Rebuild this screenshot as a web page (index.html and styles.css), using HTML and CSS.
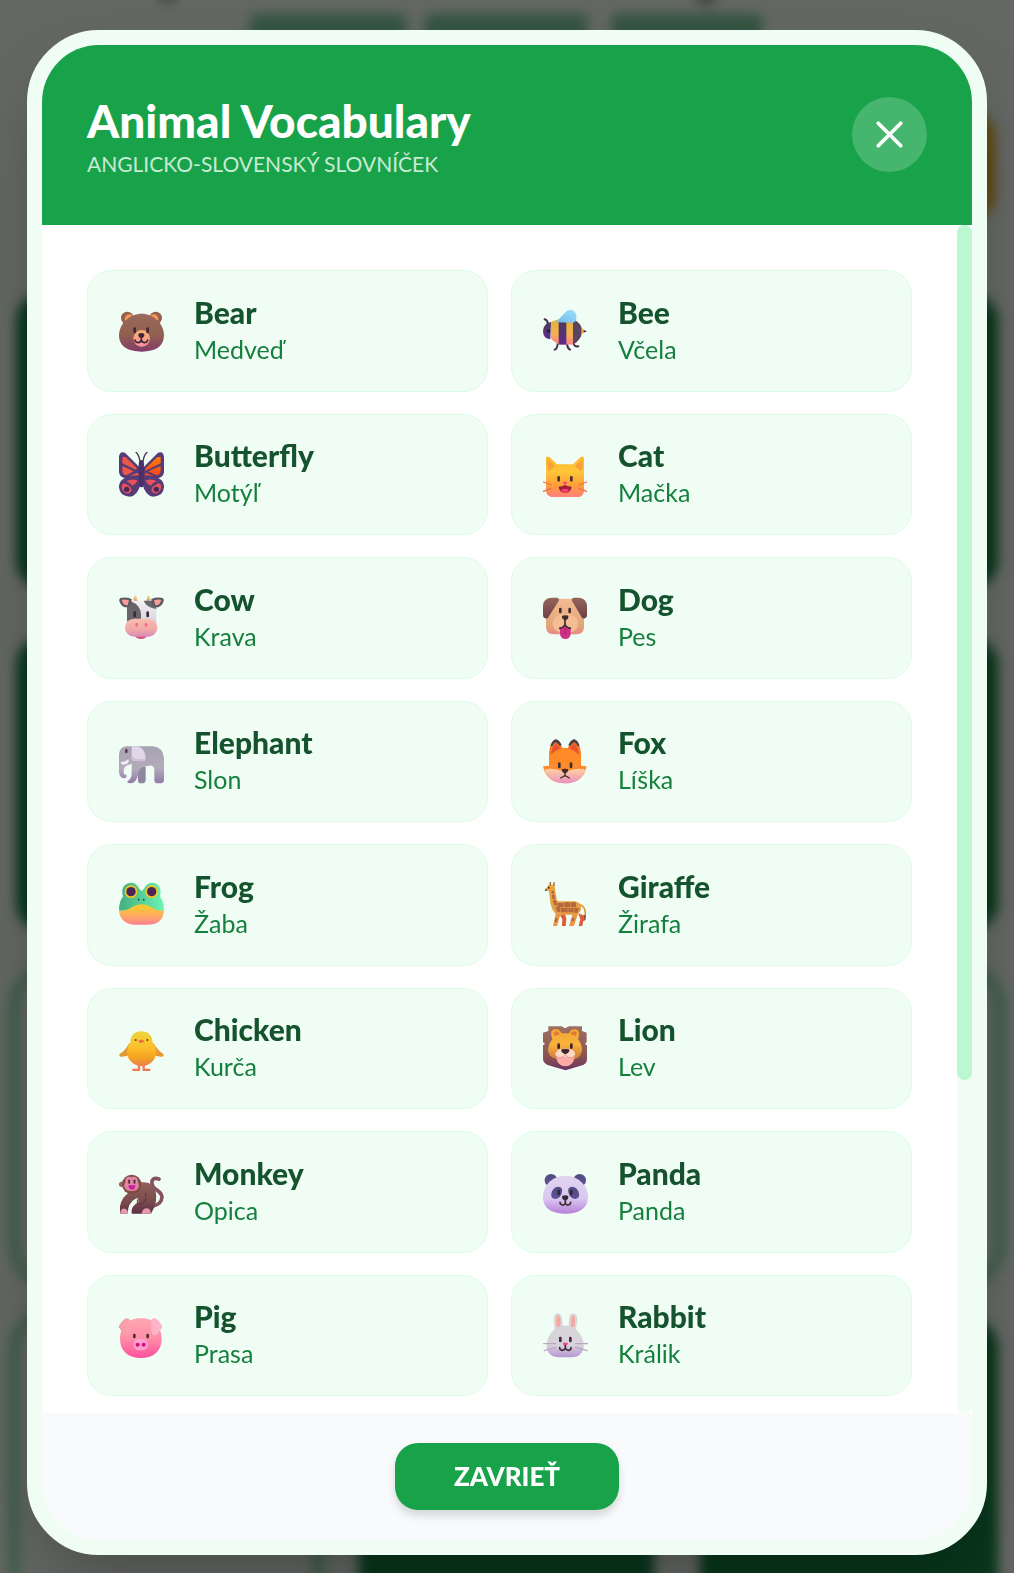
FILE: index.html
```html
<!DOCTYPE html>
<html lang="sk">
<head>
<meta charset="utf-8">
<meta name="viewport" content="width=device-width, initial-scale=1">
<title>Animal Vocabulary</title>
<link rel="stylesheet" href="styles.css">
</head>
<body>
<svg class="defs" aria-hidden="true">
  <defs>
    <linearGradient id="bear" x1="0" y1="0" x2="0" y2="1"><stop offset="0" stop-color="#9a6a5c"/><stop offset=".55" stop-color="#91604f"/><stop offset="1" stop-color="#823a6c"/></linearGradient>
    <linearGradient id="snout" x1="0" y1="0" x2="0" y2="1"><stop offset="0" stop-color="#f3b06d"/><stop offset="1" stop-color="#ff93a0"/></linearGradient>
    <linearGradient id="beeYellow" x1="0" y1="0" x2="0" y2="1"><stop offset="0" stop-color="#e3b23e"/><stop offset=".6" stop-color="#f6b04c"/><stop offset="1" stop-color="#fa7e90"/></linearGradient>
    <linearGradient id="beeDark" x1="0" y1="0" x2="0" y2="1"><stop offset="0" stop-color="#4a3c50"/><stop offset="1" stop-color="#5f2a90"/></linearGradient>
    <linearGradient id="wing" x1="0" y1="1" x2="1" y2="0"><stop offset="0" stop-color="#6fb9e8"/><stop offset="1" stop-color="#9fe0fb"/></linearGradient>
    <linearGradient id="cat" x1="0" y1="0" x2="0" y2="1"><stop offset="0" stop-color="#fbb52f"/><stop offset=".35" stop-color="#ffc737"/><stop offset=".7" stop-color="#ff9f3a"/><stop offset="1" stop-color="#ff7f7c"/></linearGradient>
    <linearGradient id="cow" x1="0" y1="0" x2="0" y2="1"><stop offset="0" stop-color="#f2f0f5"/><stop offset="1" stop-color="#d5d0dc"/></linearGradient>
    <linearGradient id="cowNose" x1="0" y1="0" x2="0" y2="1"><stop offset="0" stop-color="#f9bdb0"/><stop offset=".6" stop-color="#f1a8a6"/><stop offset="1" stop-color="#d888b8"/></linearGradient>
    <linearGradient id="horn" x1="0" y1="0" x2="0" y2="1"><stop offset="0" stop-color="#ffe09a"/><stop offset="1" stop-color="#d99a5a"/></linearGradient>
    <linearGradient id="elephant" x1="0" y1="0" x2="0" y2="1"><stop offset="0" stop-color="#a8a3b0"/><stop offset=".6" stop-color="#b1abbb"/><stop offset="1" stop-color="#9379a8"/></linearGradient>
    <linearGradient id="dog" x1="0" y1="0" x2="0" y2="1"><stop offset="0" stop-color="#f3bb93"/><stop offset=".7" stop-color="#e3a878"/><stop offset="1" stop-color="#e58c80"/></linearGradient>
    <linearGradient id="brown" x1="0" y1="0" x2="0" y2="1"><stop offset="0" stop-color="#96655a"/><stop offset="1" stop-color="#6c4149"/></linearGradient>
    <linearGradient id="fox" x1="0" y1="0" x2="0" y2="1"><stop offset="0" stop-color="#f4661c"/><stop offset=".4" stop-color="#ff8a24"/><stop offset="1" stop-color="#ff8d40"/></linearGradient>
    <linearGradient id="foxCheek" x1="0" y1="0" x2="0" y2="1"><stop offset="0" stop-color="#ffd2a0"/><stop offset="1" stop-color="#eb8fc0"/></linearGradient>
    <linearGradient id="frog" x1="0" y1="0" x2="1" y2="0"><stop offset="0" stop-color="#44b07f"/><stop offset=".5" stop-color="#58cf98"/><stop offset="1" stop-color="#6bf5b2"/></linearGradient>
    <linearGradient id="frogBelly" x1="0" y1="0" x2="0" y2="1"><stop offset="0" stop-color="#fbd022"/><stop offset=".6" stop-color="#ffa768"/><stop offset="1" stop-color="#fb7f90"/></linearGradient>
    <linearGradient id="chick" x1="0" y1="0" x2="0" y2="1"><stop offset="0" stop-color="#edd53a"/><stop offset=".45" stop-color="#fcc12c"/><stop offset=".75" stop-color="#f7a322"/><stop offset="1" stop-color="#e8804a"/></linearGradient>
    <linearGradient id="giraffe" x1="0" y1="0" x2="0" y2="1"><stop offset="0" stop-color="#e9a83f"/><stop offset="1" stop-color="#e8954a"/></linearGradient>
    <linearGradient id="mane" x1="0" y1="0" x2="0" y2="1"><stop offset="0" stop-color="#a06e62"/><stop offset=".65" stop-color="#8a5752"/><stop offset="1" stop-color="#6d2f60"/></linearGradient>
    <linearGradient id="lion" x1="0" y1="0" x2="0" y2="1"><stop offset="0" stop-color="#f3a52f"/><stop offset=".5" stop-color="#f9b33c"/><stop offset="1" stop-color="#d07a3c"/></linearGradient>
    <linearGradient id="monkey" x1="0" y1="0" x2="0" y2="1"><stop offset="0" stop-color="#8f5f58"/><stop offset=".6" stop-color="#7a4c4e"/><stop offset="1" stop-color="#5f3046"/></linearGradient>
    <linearGradient id="panda" x1="0" y1="0" x2="0" y2="1"><stop offset="0" stop-color="#e0d3ee"/><stop offset=".6" stop-color="#dac8ef"/><stop offset="1" stop-color="#b780dc"/></linearGradient>
    <linearGradient id="navy" x1="0" y1="0" x2="0" y2="1"><stop offset="0" stop-color="#4f4c80"/><stop offset="1" stop-color="#61509a"/></linearGradient>
    <linearGradient id="pig" x1="0" y1="0" x2="0" y2="1"><stop offset="0" stop-color="#fda6b4"/><stop offset=".5" stop-color="#ff8fa6"/><stop offset="1" stop-color="#ff4fa0"/></linearGradient>
    <linearGradient id="pigEar" x1="0" y1="0" x2="1" y2="0"><stop offset="0" stop-color="#f79aa0"/><stop offset="1" stop-color="#ffb8d0"/></linearGradient>
    <linearGradient id="rabbit" x1="0" y1="0" x2="0" y2="1"><stop offset="0" stop-color="#d6d4d8"/><stop offset=".6" stop-color="#d8d3dc"/><stop offset="1" stop-color="#b795d2"/></linearGradient>
    <linearGradient id="butterflyHot" x1="0" y1="0" x2="0" y2="1"><stop offset="0" stop-color="#ff7a0a"/><stop offset="1" stop-color="#f9441a"/></linearGradient>
    <filter id="soft" x="-20%" y="-20%" width="140%" height="140%" color-interpolation-filters="sRGB"><feGaussianBlur stdDeviation="6"/></filter>
    <clipPath id="beeBody"><path d="M24 42Q44 30 90 34Q114 44 120 70Q112 98 90 110H50Q28 100 24 90Z"/></clipPath>
  </defs>
</svg>

<svg class="backdrop" viewBox="0 0 1014 1573" preserveAspectRatio="none" aria-hidden="true">
  <rect width="1014" height="1573" fill="#646864"/>
  <g filter="url(#soft)">
    <g fill="#345440"><rect x="250" y="14" width="156" height="26"/><rect x="425" y="14" width="162" height="26"/><rect x="612" y="14" width="150" height="26"/></g>
    <g fill="#444844"><circle cx="168" cy="-6" r="10"/><circle cx="706" cy="-6" r="12"/></g>
    <rect x="700" y="112" width="295" height="108" rx="24" fill="#5f470c"/>
    <g fill="#08371c">
      <rect x="16" y="292" width="982" height="298" rx="30"/>
      <rect x="16" y="636" width="982" height="296" rx="30"/>
      <rect x="359" y="1318" width="295" height="302" rx="30"/>
      <rect x="700" y="1318" width="298" height="302" rx="30"/>
    </g>
    <g fill="none" stroke="#3f5d4a" stroke-width="12">
      <rect x="14" y="970" width="986" height="312" rx="36"/>
      <rect x="14" y="1314" width="304" height="312" rx="36"/>
    </g>
  </g>
</svg>

<div class="overlay">
  <section class="modal" role="dialog" aria-modal="true" aria-labelledby="modal-title">
    <header class="modal-header">
      <div class="heading">
        <h1 class="title" id="modal-title">Animal Vocabulary</h1>
        <p class="subtitle">ANGLICKO-SLOVENSKÝ SLOVNÍČEK</p>
      </div>
      <button class="close" type="button" aria-label="Zavrieť okno">
        <svg class="close-icon" viewBox="0 0 24 24" fill="none" stroke="currentColor" stroke-width="2" stroke-linecap="round"><path d="M18 6 6 18M6 6l12 12"/></svg>
      </button>
    </header>

    <div class="modal-body">
      <ul class="words">
        <li class="card">
          <svg class="animal" viewBox="0 0 135 135" aria-hidden="true">
            <circle cx="25" cy="30" r="19" fill="#96604f"/><circle cx="110" cy="30" r="19" fill="#96604f"/><circle cx="31" cy="33" r="14" fill="#f79a4f"/><circle cx="104" cy="33" r="14" fill="#f79a4f"/>
            <path d="M68 17C104 17 135 48 135 82C135 116 108 131 68 131S0 116 0 82C0 48 32 17 68 17Z" fill="url(#bear)"/>
            <circle cx="68" cy="91" r="25" fill="url(#snout)"/>
            <g fill="#402636"><rect x="43" y="58" width="8" height="18" rx="4"/><rect x="82" y="58" width="8" height="18" rx="4"/><path d="M58 80q0-5 9-5t9 5q0 8-9 10-9-2-9-10Z"/></g>
            <path d="M67 88v8q-3 9-11 8-7-1-8-8M67 96q3 9 11 8 7-1 8-8" fill="none" stroke="#402636" stroke-width="5" stroke-linecap="round"/>
          </svg>
          <div class="text"><h2 class="name">Bear</h2><p class="translation">Medveď</p></div>
        </li>
        <li class="card">
          <svg class="animal" viewBox="0 0 135 135" aria-hidden="true">
            <path d="M15 50Q14 36 5 34M44 108q-1 14-9 17M72 108q2 14 9 17M92 104q0 13 14 11" fill="none" stroke="#46294e" stroke-width="6" stroke-linecap="round"/>
            <path d="M112 56l12 10 6 4-6 2-14 14Z" fill="#f3b64b"/><path d="M122 66l10 4-10 4Z" fill="#46294e"/>
            <g clip-path="url(#beeBody)"><rect x="20" y="30" width="104" height="82" fill="url(#beeYellow)"/><rect x="47" y="30" width="23" height="82" fill="url(#beeDark)"/><path d="M90 30h20q12 40-2 82H90Z" fill="#5a4560"/></g>
            <path d="M24 42Q0 48 0 70T22 94Z" fill="url(#beeDark)"/><circle cx="17" cy="69" r="5" fill="#251c2c"/>
            <path d="M39 43L66 14Q76 2 90 7Q102 14 100 32Q98 44 88 44Z" fill="url(#wing)"/>
          </svg>
          <div class="text"><h2 class="name">Bee</h2><p class="translation">Včela</p></div>
        </li>
        <li class="card">
          <svg class="animal" viewBox="0 0 135 135" aria-hidden="true">
            <g fill="#563c77"><path d="M66 50L18 2Q2-4 0 14V60Q2 78 22 79H62Z"/><path d="M69 50L117 2Q133-4 135 14V60Q133 78 113 79H73Z"/><path d="M66 76H32Q0 78 0 106Q2 133 32 134Q56 132 66 92Z"/><path d="M69 76H103Q135 78 135 106Q133 133 103 134Q79 132 69 92Z"/></g>
            <path d="M10 15L20 15 54 49 50 53 10 34ZM10 42L44 58 22 70Q11 68 10 58ZM32 71L56 62 60 70Z" fill="#ee5647"/>
            <path d="M125 15L115 15 80 49 78 57 125 34ZM125 42L88 58 112 70Q124 68 125 58ZM103 71L80 62 76 70Z" fill="url(#butterflyHot)"/>
            <path d="M22 88Q38 78 56 86Q48 98 40 101Q33 92 22 88ZM8 102Q10 94 17 94L35 105 38 116Q30 128 18 122 8 114 8 102ZM113 88Q97 78 79 86Q87 98 95 101Q102 92 113 88ZM127 102Q125 94 118 94L100 105 97 116Q105 128 117 122 127 114 127 102Z" fill="#e8505a"/>
            <circle cx="23" cy="112" r="8" fill="#452859"/><circle cx="112" cy="112" r="8" fill="#452859"/>
            <path d="M63 30Q60 8 51 1M72 30Q75 8 84 1" fill="none" stroke="#49305c" stroke-width="4" stroke-linecap="round"/><path d="M67 24q7 0 8 12l-1 62q-1 8-7 8t-7-8l-1-62q2-12 8-12Z" fill="#49306a"/>
          </svg>
          <div class="text"><h2 class="name">Butterfly</h2><p class="translation">Motýľ</p></div>
        </li>
        <li class="card">
          <svg class="animal" viewBox="0 0 135 135" aria-hidden="true">
            <path d="M9 20Q10 10 20 16L42 37H90L112 16Q122 10 123 20V118Q121 135 102 136H30Q11 134 9 118Z" fill="url(#cat)"/>
            <path d="M14 24L36 42 18 58Q10 48 14 24ZM118 24L96 42 114 58Q122 48 118 24Z" fill="#f8a13a"/>
            <g fill="#4a3030"><rect x="43" y="72" width="8" height="17" rx="4"/><rect x="81" y="72" width="8" height="17" rx="4"/></g>
            <path d="M60 89h12q0 8-6 9-6-1-6-9Z" fill="#ff3f88"/><path d="M47 104q10 0 19-5 9 5 20 5-2 18-20 18-17 0-19-18Z" fill="#9b2037"/><path d="M53 114q13-8 26 0-4 8-13 8t-13-8Z" fill="#f63d75"/>
            <path d="M1 90l23 9M1 118l23-9M131 90l-23 9M131 118l-23-9" stroke="#ee7045" stroke-width="4" stroke-linecap="round"/>
          </svg>
          <div class="text"><h2 class="name">Cat</h2><p class="translation">Mačka</p></div>
        </li>
        <li class="card">
          <svg class="animal" viewBox="0 0 135 135" aria-hidden="true">
            <path d="M44 18Q40 4 53 0Q50 12 60 20ZM92 18Q98 8 86 0Q84 12 80 20Z" fill="url(#horn)"/>
            <path d="M48 120h36q-2 12-18 12t-18-12Z" fill="#d94f7c"/>
            <path d="M42 17H96Q112 20 112 36V90H24V34Q24 18 42 17Z" fill="url(#cow)"/><path d="M24 30Q28 20 38 20Q62 28 66 56V80H24Z" fill="#67656a"/><path d="M74 17H104Q114 24 112 42Q82 38 74 17Z" fill="#69686b"/>
            <path d="M38 12Q20 5 4 9Q-2 14 3 23Q10 38 26 37Q38 34 38 12ZM97 12Q115 5 131 9Q137 14 132 23Q125 38 109 37Q97 34 97 12Z" fill="#5b5a60"/><path d="M30 16Q14 12 8 15Q12 32 26 31ZM105 16Q121 12 127 15Q123 32 109 31Z" fill="#f79b96"/>
            <rect x="18" y="71" width="97" height="54" rx="27" fill="url(#cowNose)"/>
            <g fill="#3d2638"><rect x="43" y="49" width="8" height="18" rx="4"/><rect x="82" y="49" width="8" height="18" rx="4"/></g><g fill="#fa6679"><ellipse cx="53" cy="89" rx="4" ry="6"/><ellipse cx="81" cy="89" rx="4" ry="6"/></g>
          </svg>
          <div class="text"><h2 class="name">Cow</h2><p class="translation">Krava</p></div>
        </li>
        <li class="card">
          <svg class="animal" viewBox="0 0 135 135" aria-hidden="true">
            <path d="M34 11H98Q123 20 123 50V98Q121 118 98 118H34Q11 118 9 98V50Q9 20 34 11Z" fill="url(#dog)"/>
            <path d="M24 8H42Q50 10 47 18L14 70Q0 72 0 60V32Q2 10 24 8ZM108 8H92Q84 10 87 18L118 70Q132 72 132 60V32Q130 10 108 8Z" fill="url(#brown)"/>
            <ellipse cx="67" cy="86" rx="38" ry="30" fill="#f4bd92"/>
            <path d="M51 99L67 92 83 99V117Q81 132 67 132T51 117Z" fill="#cf2f84"/><path d="M67 100v18" stroke="#a81c6c" stroke-width="3"/>
            <g fill="#402c30"><rect x="48" y="38" width="8" height="17" rx="4"/><rect x="76" y="38" width="8" height="17" rx="4"/><path d="M57 65q0-4 10-4t9 4q0 8-9 10-10-2-10-10Z"/></g>
            <path d="M66 74v14q-2 8-16 12M66 88q2 8 16 12" fill="none" stroke="#402c30" stroke-width="5" stroke-linecap="round"/>
          </svg>
          <div class="text"><h2 class="name">Dog</h2><p class="translation">Pes</p></div>
        </li>
        <li class="card">
          <svg class="animal" viewBox="0 0 135 135" aria-hidden="true">
            <path d="M56 84H80V122Q80 133 70 133H62Q56 132 57 124Z" fill="#8f86a2"/>
            <path d="M22 22H100Q132 24 135 58V124Q135 133 124 133H112Q106 132 106 124V92Q104 78 90 80L72 84Q60 88 58 104Q52 133 34 133Q22 132 26 126Q38 118 38 104V74L22 80Q14 84 14 98Q14 108 22 107Q26 112 20 116Q12 120 6 114Q0 108 0 98V46Q2 24 22 22Z" fill="url(#elephant)"/>
            <path d="M38 22H56Q78 28 80 56Q80 66 72 66H44Q38 66 38 58Z" fill="#e1d6ea"/><path d="M38 58Q40 67 50 67H72Q80 66 80 60L60 60Q44 62 38 46Z" fill="#cfc0da"/>
            <path d="M6 68Q20 70 28 60Q32 70 22 76Q13 78 6 75Z" fill="#f3ecf8"/><ellipse cx="22" cy="36" rx="4" ry="7" fill="#58384e"/>
          </svg>
          <div class="text"><h2 class="name">Elephant</h2><p class="translation">Slon</p></div>
        </li>
        <li class="card">
          <svg class="animal" viewBox="0 0 135 135" aria-hidden="true">
            <path d="M18 80V42Q22 8 36 2Q44-1 52 14L58 28H74L80 14Q88-1 96 2Q110 10 114 42V80L131 82Q122 132 66 133Q10 132 0 82Z" fill="url(#fox)"/>
            <path d="M24 46Q28 22 38 16Q48 20 52 30Q34 36 24 46ZM108 46Q104 22 94 16Q84 20 80 30Q98 36 108 46Z" fill="#e65232"/>
            <path d="M22 20Q28 4 38 1Q48 2 56 18L50 21Q42 10 38 10Q32 12 28 22ZM110 20Q104 4 94 1Q84 2 76 18L82 21Q90 10 94 10Q100 12 104 22Z" fill="#4b4248"/>
            <path d="M30 44Q64 8 102 44V70H30Z" fill="#ff8a28"/>
            <path d="M4 92Q36 84 66 100Q96 84 128 92Q114 133 66 133T4 92Z" fill="url(#foxCheek)"/>
            <g fill="#3f2c2e"><rect x="45" y="70" width="8" height="18" rx="4"/><rect x="80" y="70" width="8" height="18" rx="4"/><path d="M56 93q0-4 10-4t10 4q-1 8-10 11-9-3-10-11Z"/></g><path d="M66 102v8l-13 7M66 110l13 7" fill="none" stroke="#3f2c2e" stroke-width="4" stroke-linecap="round"/>
          </svg>
          <div class="text"><h2 class="name">Fox</h2><p class="translation">Líška</p></div>
        </li>
        <li class="card">
          <svg class="animal" viewBox="0 0 135 135" aria-hidden="true">
            <path d="M0 86Q0 56 12 44Q4 14 24 5Q48-4 61 20L68 27L75 20Q86-3 110 4Q130 14 123 44Q135 58 135 86Z" fill="url(#frog)"/>
            <path d="M0 86Q22 88 38 76Q68 58 98 76Q114 88 135 86Q132 128 84 128H50Q4 126 0 86Z" fill="url(#frogBelly)"/>
            <circle cx="36" cy="29" r="19" fill="#f8c622"/><circle cx="98" cy="29" r="19" fill="#f8c622"/><circle cx="36" cy="29" r="14" fill="#4a2757"/><circle cx="98" cy="29" r="14" fill="#4a2757"/><circle cx="59" cy="53" r="3" fill="#1d5a48"/><circle cx="74" cy="53" r="3" fill="#1d5a48"/>
          </svg>
          <div class="text"><h2 class="name">Frog</h2><p class="translation">Žaba</p></div>
        </li>
        <li class="card">
          <svg class="animal" viewBox="0 0 135 135" aria-hidden="true">
            <path d="M48 94L66 96 70 110 68 132H57L58 112ZM106 94L120 100 122 110 118 132H107L112 112Z" fill="#e05a35"/>
            <path d="M108 66Q128 74 127 94L125 112" fill="none" stroke="#dd9a3d" stroke-width="5"/><path d="M121 98l8 2-2 14-6 4Z" fill="#8d563b"/>
            <path d="M16 8H28Q36 10 36 20L41 52Q42 58 52 58H96Q116 62 114 84L104 98Q100 108 96 124L92 132H78L88 98H56Q48 104 46 120L42 132H30L38 96Q22 80 20 46L18 28L7 25Q4 20 12 17Z" fill="url(#giraffe)"/>
            <path d="M25 26h7l2 9h-8ZM27 38h8l1 13h-8ZM29 55l9-2 5 15-8 3ZM44 63h18v13H43ZM64 61h17v15H64ZM83 61h16v15H83ZM37 75h15v15H43ZM54 78h20v13H54ZM76 78h16v13H76ZM94 78h14l-5 14h-9ZM37 108h7l-2 12h-7ZM88 108h8l-4 10h-8Z" fill="#b3693f"/>
            <path d="M22 10V0M33 12V1" stroke="#97603c" stroke-width="4"/><circle cx="17" cy="17" r="3" fill="#4c2c2a"/><path d="M6 22h5v5H6Z" fill="#76463a"/>
          </svg>
          <div class="text"><h2 class="name">Giraffe</h2><p class="translation">Žirafa</p></div>
        </li>
        <li class="card">
          <svg class="animal" viewBox="0 0 135 135" aria-hidden="true">
            <path d="M32 50Q18 74 2 84Q-2 92 10 92Q28 92 38 82ZM103 50Q117 74 133 84Q137 92 125 92Q107 92 97 82Z" fill="#e39a32"/>
            <path d="M60 112v20H40M74 112v20h20" fill="none" stroke="#f3784e" stroke-width="7" stroke-linejoin="round"/>
            <path d="M67 16C88 16 101 30 101 50C115 64 114 88 104 102Q90 120 68 120T32 102C21 88 22 64 34 50C34 30 46 16 67 16Z" fill="url(#chick)"/>
            <path d="M58 45Q67 36 76 45Q76 50 67 50T58 45Z" fill="#e8703b"/><circle cx="50" cy="42" r="3" fill="#5b3b2a"/><circle cx="85" cy="42" r="3" fill="#5b3b2a"/>
          </svg>
          <div class="text"><h2 class="name">Chicken</h2><p class="translation">Kurča</p></div>
        </li>
        <li class="card">
          <svg class="animal" viewBox="0 0 135 135" aria-hidden="true">
            <path d="M16 1H56L66 7 78 1H117V15L131 20V48L126 54 132 58V100Q132 112 120 117L68 133 14 117Q0 110 0 98V58L6 54 0 48V20L16 15Z" fill="url(#mane)"/>
            <path d="M28 40Q18 12 36 9Q48 7 56 22H78Q84 7 98 10Q114 14 105 40Q118 56 117 74Q110 100 88 100H46Q20 98 15 74Q16 54 28 40Z" fill="url(#lion)"/><path d="M34 30Q28 16 40 16Q48 18 50 25ZM99 30Q105 16 93 16Q85 18 83 25Z" fill="#e07a39"/>
            <circle cx="67" cy="94" r="27" fill="#fcaaa6"/><path d="M36 84Q44 68 58 68L66 80 76 68Q92 68 97 84Q92 98 67 92Q42 98 36 84Z" fill="#fed8c6"/>
            <g fill="#402528"><rect x="43" y="52" width="8" height="17" rx="4"/><rect x="81" y="52" width="8" height="17" rx="4"/><path d="M54 73q0-4 13-4t13 4q-2 8-13 12-11-4-13-12Z"/></g><path d="M42 94q18 4 25-8 7 12 25 8" fill="none" stroke="#e79c96" stroke-width="3"/>
          </svg>
          <div class="text"><h2 class="name">Lion</h2><p class="translation">Lev</p></div>
        </li>
        <li class="card">
          <svg class="animal" viewBox="0 0 135 135" aria-hidden="true">
            <path d="M100 112Q128 106 129 84Q128 72 112 62Q96 50 99 36Q104 24 120 30" fill="none" stroke="#865260" stroke-width="11" stroke-linecap="round"/>
            <path d="M66 40Q102 36 110 68Q116 96 102 122L96 134H38V122Q42 108 58 100V86Q34 92 28 118L26 134H3V112Q8 82 34 68Z" fill="url(#monkey)"/><path d="M58 88Q48 106 68 106Q88 88 78 72" fill="none" stroke="#5b3244" stroke-width="3"/>
            <circle cx="8" cy="46" r="8" fill="#9b625a"/><circle cx="66" cy="46" r="7" fill="#9b625a"/><circle cx="38" cy="46" r="29" fill="#814d43"/><path d="M37 24Q56 20 57 38L60 50Q58 66 38 66T15 50L19 38Q18 20 37 24Z" fill="#df84a2"/>
            <path d="M28 49h21q0 13-10 13T28 49Z" fill="#c51fa0"/><g fill="#46223b"><rect x="28" y="32" width="5" height="12" rx="2"/><rect x="44" y="32" width="5" height="12" rx="2"/></g>
            <path d="M3 134Q6 117 17 119Q27 121 27 134ZM68 134Q70 118 84 118Q96 120 96 134Z" fill="#e39aab"/>
          </svg>
          <div class="text"><h2 class="name">Monkey</h2><p class="translation">Opica</p></div>
        </li>
        <li class="card">
          <svg class="animal" viewBox="0 0 135 135" aria-hidden="true">
            <circle cx="24" cy="34" r="19" fill="url(#navy)"/><circle cx="110" cy="34" r="19" fill="url(#navy)"/>
            <path d="M67 20C106 20 135 50 135 84C135 118 108 134 67 134S0 118 0 84C0 50 28 20 67 20Z" fill="url(#panda)"/>
            <path d="M46 53Q60 54 57 70Q52 91 35 90Q22 88 25 73Q30 54 46 53ZM87 53Q73 54 76 70Q81 91 98 90Q111 88 108 73Q103 54 87 53Z" fill="url(#navy)"/>
            <g fill="#302936"><rect x="43" y="62" width="8" height="17" rx="4"/><rect x="81" y="62" width="8" height="17" rx="4"/><path d="M57 84q0-5 10-5t9 5q0 8-9 11-10-3-10-11Z"/></g><path d="M67 93v9q-3 8-9 6-7-1-7-8M67 102q3 8 9 6 7-1 7-8" fill="none" stroke="#3e3038" stroke-width="5" stroke-linecap="round"/>
          </svg>
          <div class="text"><h2 class="name">Panda</h2><p class="translation">Panda</p></div>
        </li>
        <li class="card">
          <svg class="animal" viewBox="0 0 135 135" aria-hidden="true">
            <path d="M66 16C104 14 128 42 128 78C128 114 104 135 66 135S3 114 3 78C3 42 28 14 66 16Z" fill="url(#pig)"/>
            <path d="M22 16Q34 15 33 28V58Q31 69 20 67Q4 52-1 42Q-1 36 14 20ZM108 16Q96 15 97 28V58Q99 69 110 67Q126 52 130 42Q130 36 116 20Z" fill="url(#pigEar)"/>
            <rect x="43" y="77" width="44" height="35" rx="17" fill="#ff9fd0"/><circle cx="56" cy="95" r="6" fill="#d30f74"/><circle cx="74" cy="95" r="6" fill="#d30f74"/><g fill="#493133"><rect x="42" y="62" width="8" height="14" rx="4"/><rect x="82" y="62" width="8" height="14" rx="4"/></g>
          </svg>
          <div class="text"><h2 class="name">Pig</h2><p class="translation">Prasa</p></div>
        </li>
        <li class="card">
          <svg class="animal" viewBox="0 0 135 135" aria-hidden="true">
            <path d="M36 48Q30 20 34 8Q44-6 55 8Q60 20 58 48ZM78 48Q76 20 80 8Q90-6 101 8Q106 20 98 48Z" fill="#d9d5dc"/><path d="M41 42Q36 8 46 6Q54 10 52 42ZM84 42Q82 10 91 6Q99 8 94 42Z" fill="#faa69d"/>
            <path d="M66 38Q92 36 110 62Q122 80 122 96Q122 132 84 133H48Q12 132 10 96Q12 76 22 62Q42 36 66 38Z" fill="url(#rabbit)"/>
            <path d="M2 92H38M4 113L38 103M134 92H98M132 113L98 103" stroke="#b9a8c4" stroke-width="4" stroke-linecap="round"/>
            <g fill="#402a38"><rect x="48" y="71" width="8" height="17" rx="4"/><rect x="78" y="71" width="8" height="17" rx="4"/></g><path d="M59 89h16q0 7-8 10-8-3-8-10Z" fill="#fa3f91"/><path d="M67 98v7q-3 8-9 7-8-1-8-8M67 105q3 8 10 7 7-1 7-8" fill="none" stroke="#402a38" stroke-width="5" stroke-linecap="round"/>
          </svg>
          <div class="text"><h2 class="name">Rabbit</h2><p class="translation">Králik</p></div>
        </li>
      </ul>
      <div class="track" aria-hidden="true"><div class="thumb"></div></div>
    </div>

    <footer class="modal-footer">
      <button class="confirm" type="button">ZAVRIEŤ</button>
    </footer>
  </section>
</div>
</body>
</html>
```
FILE: styles.css
```css
* {
  box-sizing: border-box;
  margin: 0;
  padding: 0;
}

body {
  background: #646864;
  font-family: Lato, "Open Sans", sans-serif;
}

button {
  border: 0;
  color: #fff;
  font-family: inherit;
  cursor: pointer;
}

.defs {
  position: absolute;
  width: 0;
  height: 0;
}

.backdrop {
  position: fixed;
  inset: 0;
  width: 100%;
  height: 100%;
}

.overlay {
  position: relative;
  display: flex;
  min-height: 100vh;
  padding: 30px 27px 18px;
}

.modal {
  display: flex;
  flex: 1;
  flex-direction: column;
  overflow: hidden;
  border: 15px solid #f0fdf4;
  border-radius: 72px;
  background: #fff;
  box-shadow: 0 36px 72px -18px rgba(0, 0, 0, 0.3);
}

.modal-header {
  display: flex;
  align-items: center;
  justify-content: space-between;
  min-height: 180px;
  padding: 39px 45px 41px;
  background: #18a34a;
  color: #fff;
}

.heading {
  padding-top: 6px;
}

.title {
  font-size: 46px;
  font-weight: 900;
  line-height: 54px;
}

.subtitle {
  color: #c9ead4;
  font-size: 21px;
  line-height: 32px;
}

.close {
  display: grid;
  place-items: center;
  width: 75px;
  height: 75px;
  border-radius: 50%;
  background: rgba(255, 255, 255, 0.2);
}

.close-icon {
  width: 45px;
  height: 45px;
}

.modal-body {
  display: flex;
  flex: 1;
}

.words {
  display: grid;
  flex: 1;
  grid-template-columns: 1fr 1fr;
  grid-auto-rows: 1fr;
  gap: 22px 23px;
  padding: 45px 45px 17px;
  list-style: none;
}

.card {
  display: flex;
  align-items: center;
  gap: 30px;
  padding: 20px 31px;
  border: 1px solid #dcfce7;
  border-radius: 24px;
  background: #f0fdf4;
}

.animal {
  flex: none;
  width: 45px;
  height: 45px;
}

.name {
  color: #14532d;
  font-size: 30px;
  font-weight: 900;
  line-height: 36px;
}

.translation {
  color: #15803d;
  font-size: 25px;
  line-height: 38px;
}

.track {
  width: 15px;
  border-radius: 8px;
  background: #f0fdf4;
}

.thumb {
  height: 72%;
  border-radius: 8px;
  background: #bbf7d0;
}

.modal-footer {
  display: flex;
  justify-content: center;
  padding: 30px;
  background: #f8fafc;
}

.confirm {
  min-width: 224px;
  padding: 15px 45px;
  border-radius: 23px;
  background: #18a34a;
  box-shadow: 0 6px 9px rgba(0, 0, 0, 0.14);
  font-size: 26px;
  font-weight: 900;
  line-height: 37px;
}
```
